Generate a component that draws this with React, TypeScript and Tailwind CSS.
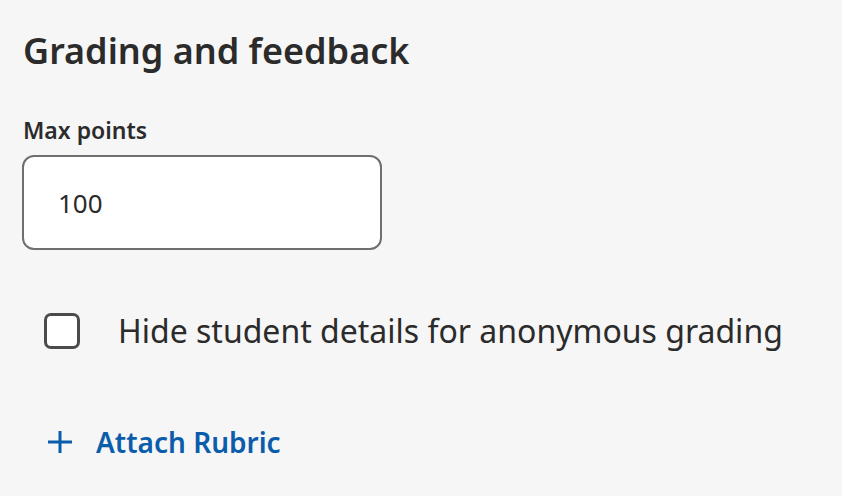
import React, { useState } from 'react';

export default function App() {
  const [points, setPoints] = useState('100');
  const [hideStudents, setHideStudents] = useState(false);

  return (
    <div className="min-h-[496px] w-full bg-[#f6f6f6] pl-[23px] pt-[27px] font-['Noto_Sans',sans-serif] text-[#2b2b2b]">
      <h2 className="text-[36px] font-semibold leading-[48px]">Grading and feedback</h2>

      {/* max points */}
      <label htmlFor="max-points" className="mt-[39px] block text-[23px] font-semibold leading-[32px]">
        Max points
      </label>
      <input
        id="max-points"
        type="text"
        value={points}
        onChange={(e) => setPoints(e.target.value)}
        className="mt-[9px] ml-[-1px] block h-[95px] w-[360px] rounded-[12px] border-2 border-[#6f6f6f] bg-white px-[34px] text-[26px] text-[#2b2b2b] outline-none"
      />

      {/* anonymous grading */}
      <label className="mt-[59px] ml-[21px] flex cursor-pointer items-center gap-[38px]">
        <input
          type="checkbox"
          checked={hideStudents}
          onChange={() => setHideStudents(!hideStudents)}
          className="peer sr-only"
        />
        <span className="block h-[36px] w-[36px] rounded-[7px] border-[3px] border-[#4b4b4b] bg-white" />
        <span className="text-[32px] leading-[44px]">Hide student details for anonymous grading</span>
      </label>

      {/* rubric */}
      <button className="mt-[71px] ml-[25px] flex items-center gap-[24px] text-[#0b5cab]">
        <svg width="24" height="24" viewBox="0 0 24 24" fill="none" stroke="currentColor" strokeWidth="3">
          <path d="M12 1v22M0 12h24" />
        </svg>
        <span className="text-[28px] font-semibold leading-[36px]">Attach Rubric</span>
      </button>
    </div>
  );
}
